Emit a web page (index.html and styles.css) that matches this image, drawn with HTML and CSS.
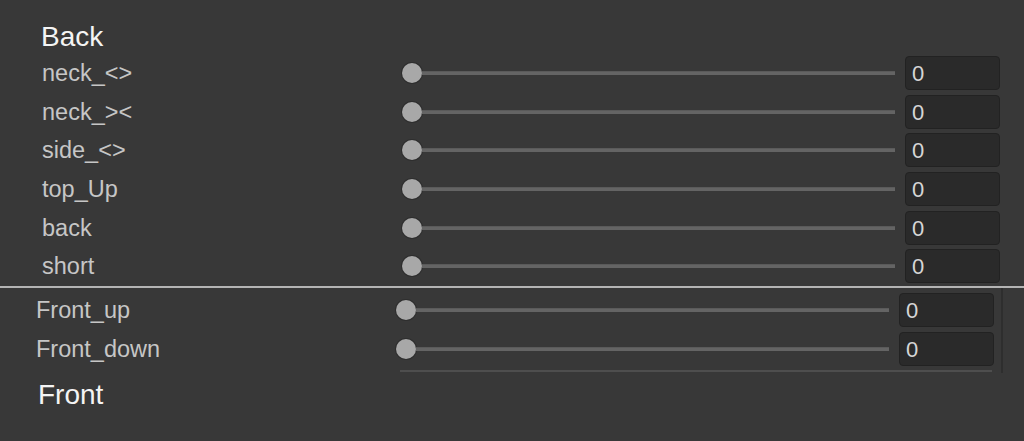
FILE: index.html
```html
<!DOCTYPE html>
<html>
<head>
<meta charset="utf-8">
<link rel="stylesheet" href="styles.css">
</head>
<body>
<div class="panel">
  <div class="title back-title">Back</div>
  <div class="rows upper">
    <div class="row"><span class="label">neck_&lt;&gt;</span><div class="slider"><span class="knob"></span><span class="track"></span></div><div class="field">0</div></div>
    <div class="row"><span class="label">neck_&gt;&lt;</span><div class="slider"><span class="knob"></span><span class="track"></span></div><div class="field">0</div></div>
    <div class="row"><span class="label">side_&lt;&gt;</span><div class="slider"><span class="knob"></span><span class="track"></span></div><div class="field">0</div></div>
    <div class="row"><span class="label">top_Up</span><div class="slider"><span class="knob"></span><span class="track"></span></div><div class="field">0</div></div>
    <div class="row"><span class="label">back</span><div class="slider"><span class="knob"></span><span class="track"></span></div><div class="field">0</div></div>
    <div class="row"><span class="label">short</span><div class="slider"><span class="knob"></span><span class="track"></span></div><div class="field">0</div></div>
  </div>
  <div class="divider"></div>
  <div class="lower">
    <div class="rows lower-rows">
      <div class="row"><span class="label">Front_up</span><div class="slider"><span class="knob"></span><span class="track"></span></div><div class="field">0</div></div>
      <div class="row"><span class="label">Front_down</span><div class="slider"><span class="knob"></span><span class="track"></span></div><div class="field">0</div></div>
    </div>
    <div class="underline"></div>
  </div>
  <div class="title front-title">Front</div>
</div>
</body>
</html>
```

FILE: styles.css
```css
html, body {
  margin: 0;
  padding: 0;
  background: #383838;
}
body {
  width: 1024px;
  height: 441px;
  overflow: hidden;
  font-family: "Liberation Sans", Arial, sans-serif;
}
.panel {
  padding-top: 20px;
}
.title {
  font-size: 28px;
  line-height: 34px;
  height: 34px;
  color: #f4f4f4;
}
.back-title {
  padding-left: 41px;
}
.rows {
  display: flex;
  flex-direction: column;
}
.upper {
  padding-left: 42px;
  padding-right: 24px;
}
.row {
  display: grid;
  grid-template-columns: 350px 1fr 95px;
  column-gap: 10px;
  align-items: center;
  height: 38.6px;
}
.label {
  font-size: 23.5px;
  color: #c6c6c6;
  line-height: 26px;
}
.slider {
  display: flex;
  align-items: center;
  height: 22px;
}
.knob {
  width: 20px;
  height: 20px;
  border-radius: 50%;
  background: #a8a8a8;
  box-shadow: 0 0 0 1px #2e2e2e;
  flex: none;
}
.track {
  flex: 1;
  height: 4px;
  background: #646464;
  box-shadow: inset 0 1px 0 #5a5a5a;
}
.field {
  height: 34px;
  box-sizing: border-box;
  border: 1px solid #222222;
  border-radius: 4px;
  background: #2a2a2a;
  color: #d6d6d6;
  font-size: 22px;
  line-height: 34px;
  padding-left: 6px;
}
.divider {
  height: 2px;
  background: #b4b4b4;
  margin-top: 0.4px;
}
.lower {
  width: 1003px;
  border-right: 2px solid #2e2e2e;
  padding-top: 2.5px;
  box-sizing: border-box;
  height: 85px;
}
.lower-rows {
  padding-left: 36px;
  padding-right: 7px;
}
.lower-rows .row {
  height: 39px;
  column-gap: 11px;
  grid-template-columns: 349px 1fr 95px;
}
.lower-rows .slider {
  margin-right: -1px;
}
.underline {
  height: 2px;
  background: #4e4e4e;
  margin-left: 400px;
  width: 592px;
  margin-top: 2px;
}
.front-title {
  padding-left: 38px;
  margin-top: 5px;
}
```
